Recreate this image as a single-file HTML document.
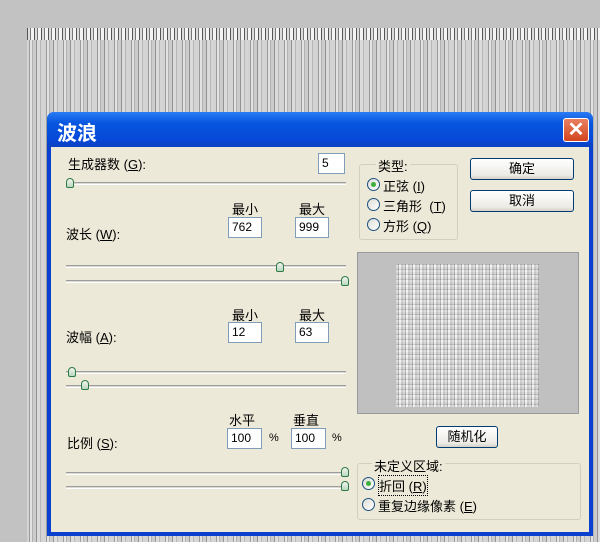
<!DOCTYPE html>
<html><head><meta charset="utf-8"><style>
*{margin:0;padding:0;box-sizing:border-box}
body{width:600px;height:542px;overflow:hidden;background:#c2c2c2;position:relative;font-family:"Liberation Sans","Noto Sans CJK SC",sans-serif;font-size:12px;color:#000}
.hair{position:absolute;left:27px;top:28px;width:573px;height:514px;background:
repeating-linear-gradient(90deg,#d8d8d8 0 2px,#888 2px 3px,#eee 3px 5px,#a8a8a8 5px 6px,#cfcfcf 6px 9px,#7c7c7c 9px 10px,#e4e4e4 10px 13px,#b0b0b0 13px 14px,#dadada 14px 17px);}
.hair:before{content:"";position:absolute;left:0;top:0;right:0;height:12px;background:repeating-linear-gradient(90deg,#555 0 1px,#ddd 1px 3px,#777 3px 4px,#f4f4f4 4px 7px)}
.hair:after{content:"";position:absolute;left:0;top:12px;right:0;bottom:0;background:rgba(200,200,200,.3)}
.dlg{position:absolute;left:47px;top:112px;width:546px;height:424px;background:#0a3fd0;border-radius:7px 7px 0 0}
.tb{position:absolute;left:0;top:0;width:546px;height:35px;border-radius:7px 7px 0 0;background:linear-gradient(#2b7cf5,#0857e0 30%,#0548d8 80%,#0a40c0)}
.tt{position:absolute;left:10px;top:5px;color:#fff;font-size:20px;font-weight:bold}
.x{position:absolute;left:516px;top:6px;width:26px;height:24px;border:1px solid #fff;border-radius:3px;background:linear-gradient(#e98060,#d2451f);color:#fff;font-size:20px;font-weight:bold;text-align:center;line-height:22px}
.body{position:absolute;width:538px;height:385px;background:#ece9d8}
.a{position:absolute;white-space:nowrap}
.in{position:absolute;background:#fff;border:1px solid #7f9db9;height:21px;padding:2px 3px;font-size:12px}
.sl{position:absolute;height:3px;border-top:1px solid #9d9d9d;border-bottom:1px solid #fff;background:#dcdad0}
.th{position:absolute;width:8px;height:10px;background:linear-gradient(#f4f4ee,#b8d8c0);border:1px solid #2d7a46;border-radius:4px 4px 2px 2px}
.btn{position:absolute;border:1px solid #003c74;border-radius:3px;background:linear-gradient(#fff,#ecebe6 80%,#d6d0c5);text-align:center;line-height:20px;font-size:13px}
.gb{position:absolute;border:1px solid #d0d0bf;border-radius:3px}
.gl{position:absolute;background:#ece9d8;padding:0 2px;font-size:13px}
.r{position:absolute;width:13px;height:13px;border:1px solid #1c5180;border-radius:50%;background:linear-gradient(135deg,#dcdcd6,#fff)}
.r.on:after{content:"";position:absolute;left:3px;top:3px;width:5px;height:5px;border-radius:50%;background:#3cae3c}
.lb{font-size:13px}
</style></head><body>
<div class="hair"></div>
<div class="dlg">
<div class="tb"><div class="tt">波浪</div><div class="x">✕</div></div>
</div>
<div class="body" style="left:51px;top:147px"></div>
<div class="a lb" style="left:68px;top:154px">生成器数 (<u>G</u>):</div>
<div class="in" style="left:318px;top:153px;width:27px">5</div>
<div class="sl" style="left:66px;top:182px;width:280px"></div>
<div class="th" style="left:66px;top:178px"></div>

<div class="a lb" style="left:232px;top:199px">最小</div>
<div class="a lb" style="left:299px;top:199px">最大</div>
<div class="in" style="left:228px;top:217px;width:34px">762</div>
<div class="in" style="left:295px;top:217px;width:34px">999</div>
<div class="a lb" style="left:66px;top:224px">波长 (<u>W</u>):</div>
<div class="sl" style="left:66px;top:265px;width:280px"></div>
<div class="th" style="left:276px;top:262px"></div>
<div class="sl" style="left:66px;top:280px;width:280px"></div>
<div class="th" style="left:341px;top:276px"></div>

<div class="a lb" style="left:232px;top:305px">最小</div>
<div class="a lb" style="left:299px;top:305px">最大</div>
<div class="in" style="left:228px;top:322px;width:34px">12</div>
<div class="in" style="left:295px;top:322px;width:34px">63</div>
<div class="a lb" style="left:66px;top:327px">波幅 (<u>A</u>):</div>
<div class="sl" style="left:66px;top:371px;width:280px"></div>
<div class="th" style="left:68px;top:367px"></div>
<div class="sl" style="left:66px;top:385px;width:280px"></div>
<div class="th" style="left:81px;top:380px"></div>

<div class="a lb" style="left:229px;top:410px">水平</div>
<div class="a lb" style="left:293px;top:410px">垂直</div>
<div class="in" style="left:227px;top:428px;width:35px">100</div>
<div class="a" style="left:269px;top:432px;font-size:11px">%</div>
<div class="in" style="left:291px;top:428px;width:35px">100</div>
<div class="a" style="left:332px;top:432px;font-size:11px">%</div>
<div class="a lb" style="left:67px;top:433px">比例 (<u>S</u>):</div>
<div class="sl" style="left:66px;top:472px;width:280px"></div>
<div class="th" style="left:341px;top:467px"></div>
<div class="sl" style="left:66px;top:486px;width:280px"></div>
<div class="th" style="left:341px;top:481px"></div>

<div class="gb" style="left:359px;top:164px;width:99px;height:76px"></div>
<div class="gl" style="left:376px;top:156px">类型:</div>
<div class="r on" style="left:367px;top:178px"></div><div class="a lb" style="left:383px;top:176px">正弦 (<u>I</u>)</div>
<div class="r" style="left:367px;top:198px"></div><div class="a lb" style="left:383px;top:196px">三角形 &nbsp;(<u>T</u>)</div>
<div class="r" style="left:367px;top:218px"></div><div class="a lb" style="left:383px;top:216px">方形 (<u>Q</u>)</div>

<div class="btn" style="left:470px;top:158px;width:104px;height:22px">确定</div>
<div class="btn" style="left:470px;top:190px;width:104px;height:22px">取消</div>

<div style="position:absolute;left:357px;top:252px;width:222px;height:162px;background:#c0c0c0;border:1px solid #9a9a9a"></div>
<div style="position:absolute;left:396px;top:264px;width:143px;height:143px;background:
repeating-linear-gradient(90deg,#d0d0d0 0 2px,#999 2px 3px,#eee 3px 5px,#bbb 5px 7px),#ddd"></div>
<div style="position:absolute;left:396px;top:264px;width:143px;height:143px;background:repeating-linear-gradient(0deg,rgba(255,255,255,.3) 0 2px,rgba(130,130,130,.25) 2px 3px,rgba(220,220,220,.3) 3px 5px)"></div>

<div class="btn" style="left:436px;top:426px;width:62px;height:22px">随机化</div>

<div class="gb" style="left:357px;top:463px;width:224px;height:57px"></div>
<div class="gl" style="left:372px;top:456px">未定义区域:</div>
<div class="r on" style="left:362px;top:477px"></div><div class="a lb" style="left:378px;top:475px;border:1px dotted #000">折回 (<u>R</u>)</div>
<div class="r" style="left:362px;top:498px"></div><div class="a lb" style="left:378px;top:496px">重复边缘像素 (<u>E</u>)</div>
</body></html>
